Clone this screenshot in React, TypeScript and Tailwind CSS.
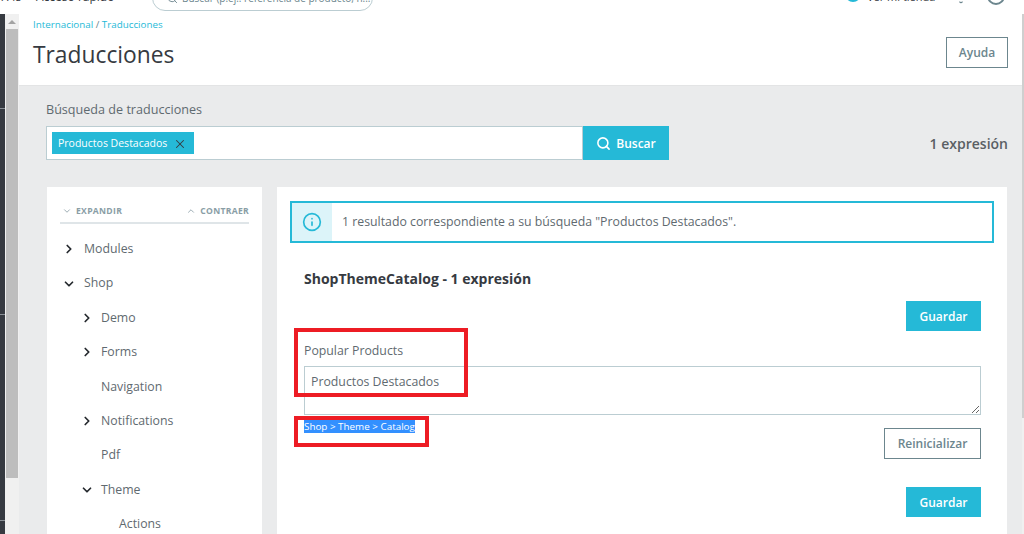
import { Bell, ChevronDown, ChevronRight, ChevronUp, Info, Search, X } from "lucide-react";

const TREE = [
  { label: "Modules", indent: "pl-[37px]", arrow: "right" },
  { label: "Shop", indent: "pl-[37px]", arrow: "down" },
  { label: "Demo", indent: "pl-[54px]", arrow: "right" },
  { label: "Forms", indent: "pl-[54px]", arrow: "right" },
  { label: "Navigation", indent: "pl-[54px]", arrow: "" },
  { label: "Notifications", indent: "pl-[54px]", arrow: "right" },
  { label: "Pdf", indent: "pl-[54px]", arrow: "" },
  { label: "Theme", indent: "pl-[54px]", arrow: "down" },
  { label: "Actions", indent: "pl-[72px]", arrow: "" },
];

function TopBar() {
  return (
    <header className="flex h-[14px] items-end overflow-hidden bg-white text-[#363a41]">
      <span className="mb-[10px] w-[36px] text-[11px] leading-[14px]">7.45</span>
      <span className="mb-[10px] w-[116px] text-[12px] leading-[14px]">Acceso rápido</span>
      <div className="mb-[3px] flex h-[26px] w-[221px] items-center gap-[4px] rounded-full border border-[#bbcdd2] pl-[14px] text-[10px] text-[#6c868e]">
        <Search size={11} strokeWidth={2} />
        <span>Buscar (p.ej.: referencia de producto, n...</span>
      </div>
      <div className="mb-[12px] ml-[472px] h-[16px] w-[16px] rounded-full bg-[#25b9d7]" />
      <span className="mb-[10px] ml-[6px] w-[86px] text-[11px] leading-[14px]">Ver mi tienda</span>
      <Bell size={16} className="mb-[10px] text-[#6c868e]" />
      <div className="mb-[9px] ml-[18px] h-[18px] w-[18px] rounded-full border-2 border-[#6c868e]" />
    </header>
  );
}

function LeftEdge() {
  return (
    <div className="flex w-[19px] shrink-0">
      <div className="relative w-[5px] bg-[#363a41]">
        <div className="absolute top-[94px] h-px w-full bg-[#8a9096]" />
        <div className="absolute top-[300px] h-px w-full bg-[#8a9096]" />
        <div className="absolute top-[506px] h-px w-full bg-[#8a9096]" />
      </div>
      <div className="flex w-[14px] flex-col items-center bg-[#f0f0f0] pr-px">
        <div className="mt-[6px] h-0 w-0 border-x-[4px] border-b-[4px] border-x-transparent border-b-[#a3a3a3]" />
        <div className="mt-[5px] h-[449px] w-[12px] bg-[#bdbdbd]" />
      </div>
    </div>
  );
}

function TreePanel() {
  return (
    <aside className="h-[347px] w-[215px] shrink-0 overflow-hidden bg-white px-[13px]">
      <div className="mt-[17px] flex h-[20px] items-center justify-between border-b-2 border-[#dfe5e8] pb-[3px] text-[8.6px] font-bold tracking-[0.3px] text-[#8a9ea6]">
        <span className="flex items-center gap-[4px] pl-[2px]">
          <ChevronDown size={10} strokeWidth={2} />
          EXPANDIR
        </span>
        <span className="flex items-center gap-[4px]">
          <ChevronUp size={10} strokeWidth={2} />
          CONTRAER
        </span>
      </div>
      <ul className="mt-[8px] -ml-[13px] text-[12.3px] text-[#5f6a70]">
        {TREE.map((item) => (
          <li key={item.label} className={`relative flex h-[34.4px] items-center ${item.indent}`}>
            {item.arrow === "right" && (
              <ChevronRight size={14} strokeWidth={3} className={`absolute text-[#25292e] ${item.indent === "pl-[37px]" ? "left-[15px]" : "left-[33px]"}`} />
            )}
            {item.arrow === "down" && (
              <ChevronDown size={14} strokeWidth={3} className={`absolute text-[#25292e] ${item.indent === "pl-[37px]" ? "left-[15px]" : "left-[33px]"}`} />
            )}
            {item.label}
          </li>
        ))}
      </ul>
    </aside>
  );
}

function GuardarButton() {
  return (
    <button className="h-[30px] w-[75px] bg-[#25b9d7] pt-px text-[12px] font-semibold text-white">Guardar</button>
  );
}

function ResultsPanel() {
  return (
    <section className="relative h-[347px] w-[730px] shrink-0 overflow-hidden bg-white px-[13px] pt-[14px]">
      <div className="flex h-[42px] w-[704px] items-stretch border-2 border-[#25b9d7] text-[12.3px] text-[#5f6a70]">
        <div className="flex w-[40px] items-center justify-center bg-[#dcf4f9]">
          <Info size={20} strokeWidth={2} className="text-[#25b9d7]" />
        </div>
        <p className="flex items-center pt-px pl-[10px]">1 resultado correspondiente a su búsqueda "Productos Destacados".</p>
      </div>
      <div className="w-[691px] pl-[14px]">
        <h3 className="mt-[26px] h-[20px] text-[14px] leading-[20px] font-bold text-[#363a41]">ShopThemeCatalog - 1 expresión</h3>
        <div className="mt-[12px] flex justify-end">
          <GuardarButton />
        </div>
        <p className="mt-[11px] h-[18px] text-[12.3px] leading-[18px] text-[#5f6a70]">Popular Products</p>
        <textarea
          readOnly
          value="Productos Destacados"
          className="mt-[6px] block h-[49px] w-full border border-[#bbcdd2] px-[6px] pt-[6px] text-[12.3px] leading-[18px] text-[#5f6a70]"
        />
        <p className="mt-[6px] h-[11px] text-[9.85px] leading-[11px]">
          <span className="bg-[#3390ff] text-white">Shop &gt; Theme &gt; Catalog</span>
        </p>
        <div className="-mt-[4px] flex justify-end">
          <button className="h-[31px] w-[97px] border border-[#6c868e] bg-white text-[12px] font-semibold text-[#6c868e]">Reinicializar</button>
        </div>
        <div className="mt-[28px] flex justify-end">
          <GuardarButton />
        </div>
      </div>
    </section>
  );
}

export default function App() {
  return (
    <div className="relative h-[534px] w-[1024px] overflow-hidden bg-white font-['Open_Sans',sans-serif]">
      <TopBar />
      <div className="flex h-[520px]">
        <LeftEdge />
        <main className="flex-1 bg-[#eaebec]">
          <div className="flex h-[72px] justify-between border-b border-[#e3e4e5] bg-white pr-[14px] pl-[14px]">
            <div>
              <p className="mt-[4px] text-[9.8px] leading-[13px] text-[#25b9d7]">
                Internacional <span className="text-[#6c868e]">/</span> Traducciones
              </p>
              <h1 className="mt-[9px] text-[22.8px] leading-[30px] text-[#363a41]">Traducciones</h1>
            </div>
            <button className="mt-[23px] h-[31px] w-[62px] border border-[#6c868e] text-[12px] font-semibold text-[#6c868e]">Ayuda</button>
          </div>

          <div className="pt-[15px] pr-[14px] pl-[27px]">
            <label className="block h-[18px] text-[12.6px] leading-[18px] text-[#5f6a70]">Búsqueda de traducciones</label>
            <div className="mt-[7px] flex items-center">
              <div className="flex h-[34px] w-[537px] items-center border border-[#bbcdd2] bg-white pl-[5px]">
                <span className="flex h-[22px] w-[142px] items-center justify-between bg-[#25b9d7] pt-px pr-[7px] pl-[6px] text-[10.5px] text-white">
                  Productos Destacados
                  <X size={14} strokeWidth={1.75} className="text-[#363a41]" />
                </span>
              </div>
              <button className="flex h-[34px] w-[86px] items-center justify-center gap-[5px] bg-[#25b9d7] pt-px text-[12px] font-semibold text-white">
                <Search size={15} strokeWidth={2.5} />
                Buscar
              </button>
              <span className="ml-auto text-[14px] font-semibold text-[#5a5f64]">1 expresión</span>
            </div>
            <div className="mt-[27px] ml-px flex gap-[15px]">
              <TreePanel />
              <ResultsPanel />
            </div>
          </div>
        </main>
        <div className="w-[2px] shrink-0 bg-[#f0f0f0]">
          <div className="h-[404px] bg-[#cfcfcf]" />
        </div>
      </div>

      {/* anotaciones rojas sobre la captura */}
      <div className="absolute top-[328px] left-[294px] h-[69px] w-[174px] border-4 border-[#ed1c24]" />
      <div className="absolute top-[416px] left-[294px] h-[31px] w-[135px] border-4 border-[#ed1c24]" />
    </div>
  );
}
